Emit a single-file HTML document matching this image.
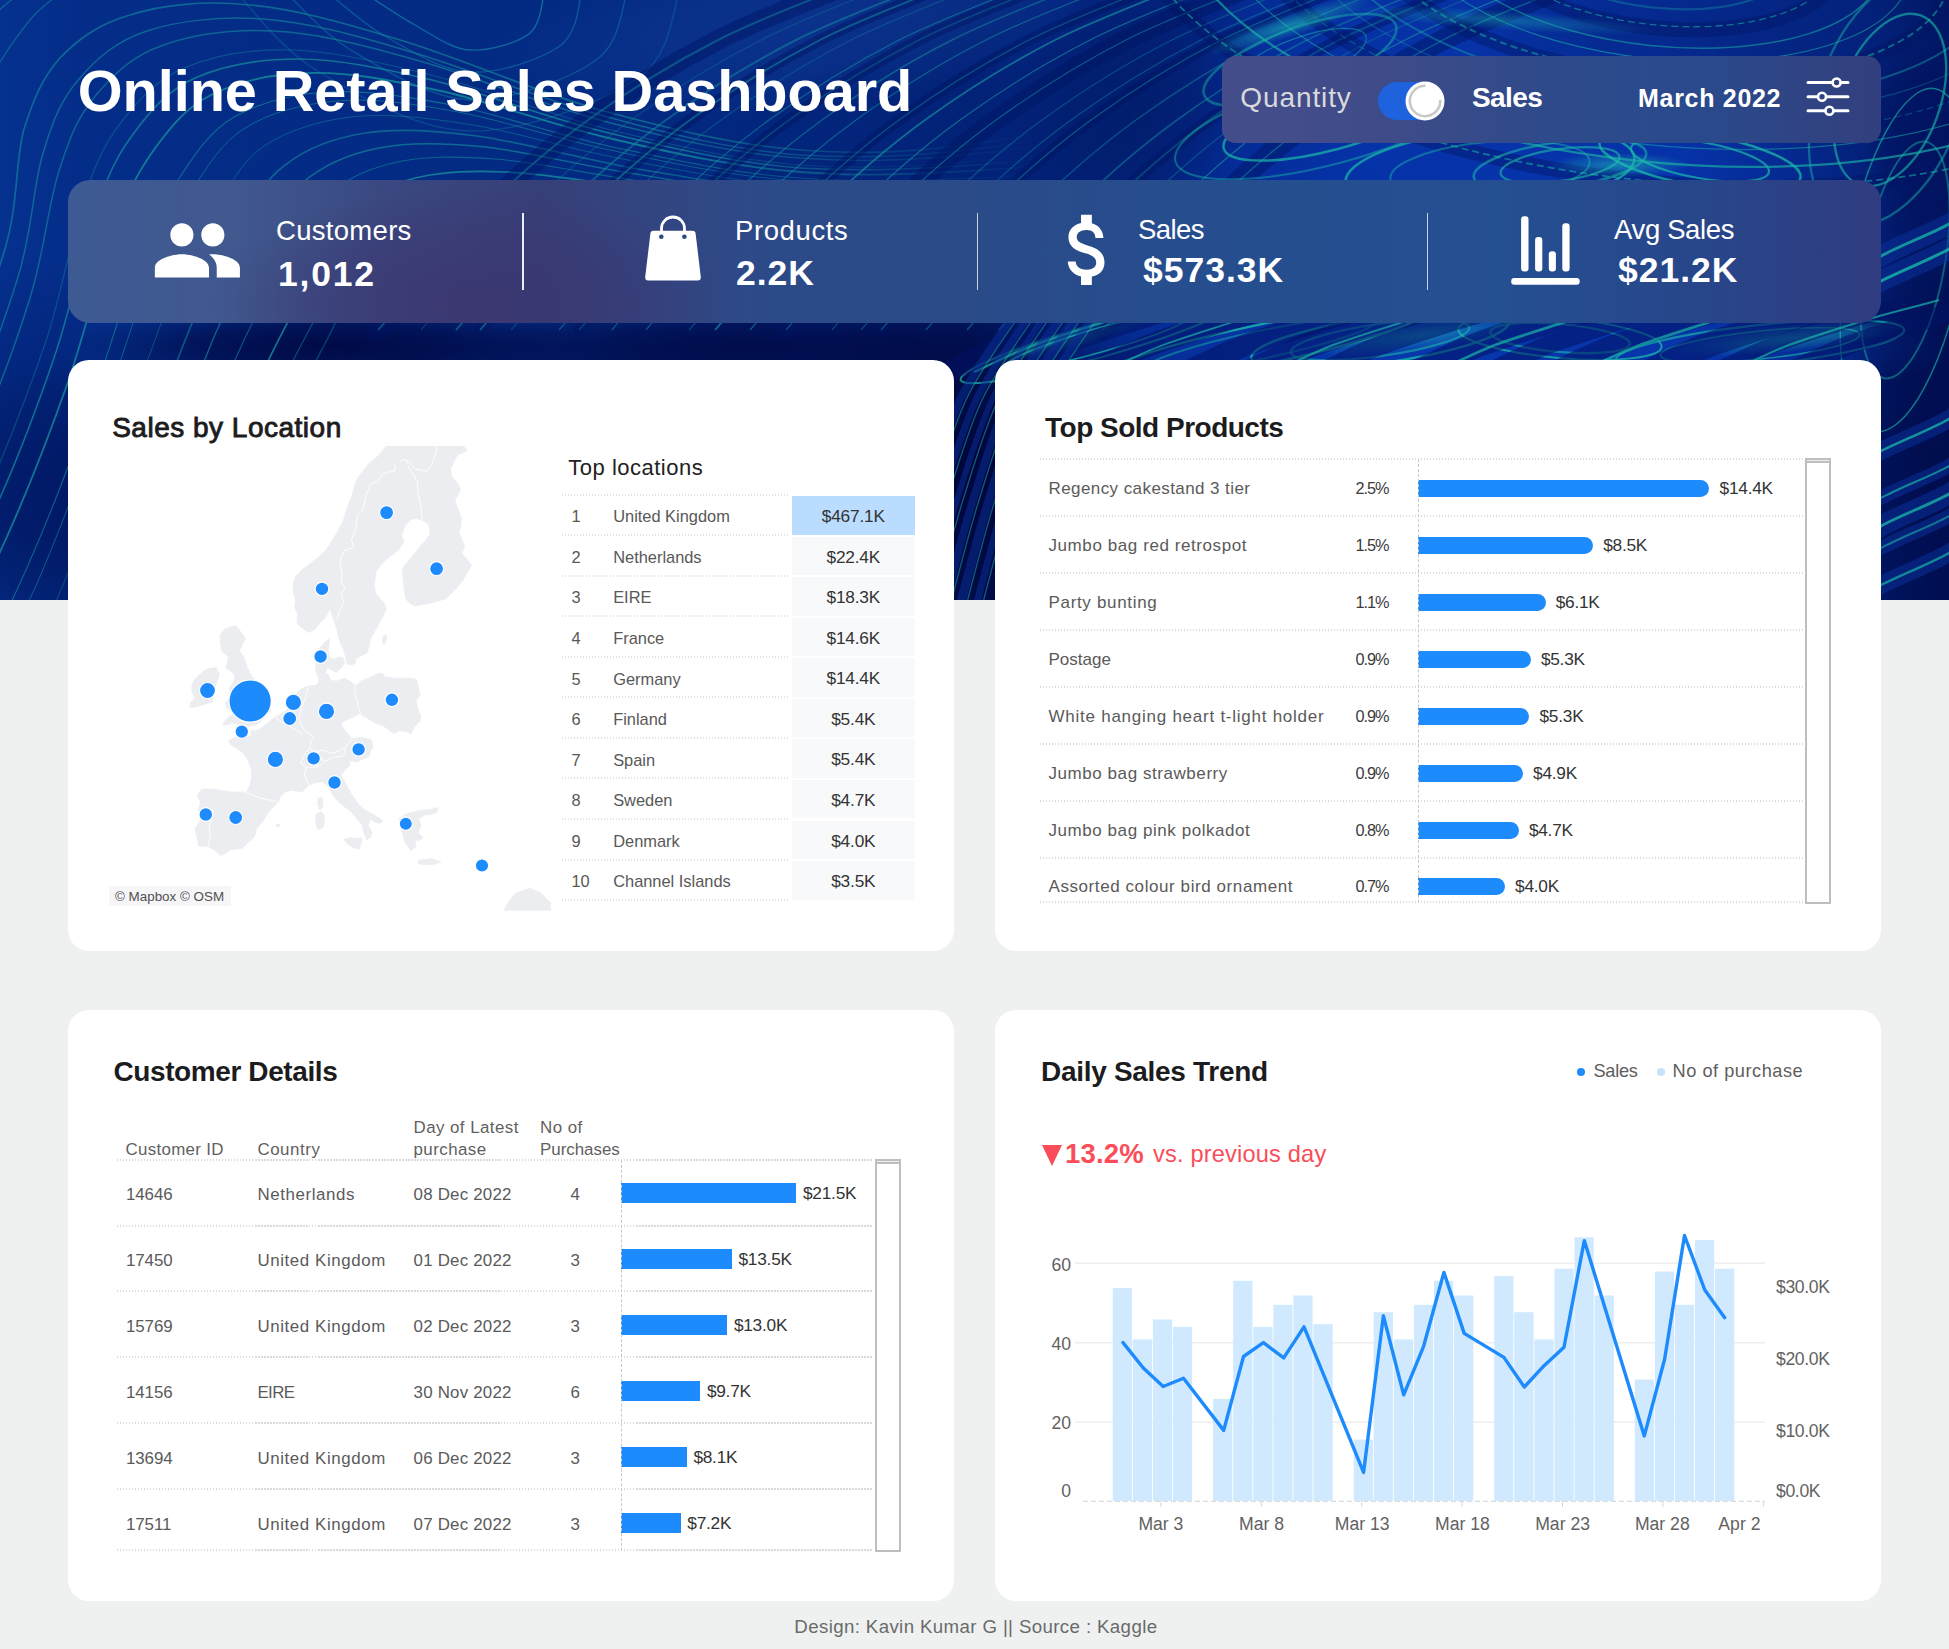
<!DOCTYPE html>
<html lang="en">
<head>
<meta charset="utf-8">
<title>Online Retail Sales Dashboard</title>
<style>
*{box-sizing:border-box;margin:0;padding:0}
html,body{width:1949px;height:1649px;overflow:hidden}
body{background:#eff1f1;font-family:"Liberation Sans",sans-serif;color:#333;position:relative}
.abs{position:absolute}
.t{position:absolute;white-space:nowrap;line-height:1}
.panel{position:absolute;background:#fff;border-radius:21px}
.hero{position:absolute;left:0;top:0;width:1949px;height:600px;overflow:hidden;background:#05308f}
.glass{position:absolute;background:rgba(120,140,200,.38)}
.b{font-weight:bold}
.dotl{height:2px;margin-top:-1px;background:repeating-linear-gradient(90deg,#e3e3e3 0 1.5px,rgba(255,255,255,0) 1.5px 3px)}
.dot{height:2px;margin-top:-1px;background:repeating-linear-gradient(90deg,#dbdbdb 0 1.5px,rgba(255,255,255,0) 1.5px 3px)}
.sbar{border:2px solid #bebebe;background:#fff;box-shadow:inset 0 1px 0 #ededed,inset 0 3px 0 #bebebe}
.vdash{width:0;border-left:1px dashed #c8c8c8}
</style>
</head>
<body>
<div class="hero">
<svg class="abs" style="left:0;top:0" width="1949" height="600" viewBox="0 0 1949 600">
<defs><linearGradient id="bgA" x1="0" y1="0" x2="1" y2="0">
<stop offset="0" stop-color="#05318f"/><stop offset=".04" stop-color="#042d89"/><stop offset=".3" stop-color="#032a82"/>
<stop offset=".5" stop-color="#022277"/><stop offset=".6" stop-color="#032686"/><stop offset=".7" stop-color="#052f9e"/><stop offset=".86" stop-color="#0631a4"/><stop offset=".95" stop-color="#03227c"/><stop offset="1" stop-color="#011560"/>
</linearGradient>
<radialGradient id="rb1"><stop offset="0" stop-color="#00063c" stop-opacity="1"/><stop offset=".5" stop-color="#00063c" stop-opacity="0.70"/><stop offset="1" stop-color="#00063c" stop-opacity="0"/></radialGradient>
<radialGradient id="rb2"><stop offset="0" stop-color="#00063c" stop-opacity="1"/><stop offset=".5" stop-color="#00063c" stop-opacity="0.70"/><stop offset="1" stop-color="#00063c" stop-opacity="0"/></radialGradient>
<radialGradient id="rb3"><stop offset="0" stop-color="#000742" stop-opacity="0.9"/><stop offset=".5" stop-color="#000742" stop-opacity="0.63"/><stop offset="1" stop-color="#000742" stop-opacity="0"/></radialGradient>
<radialGradient id="rb4"><stop offset="0" stop-color="#000742" stop-opacity="0.8"/><stop offset=".5" stop-color="#000742" stop-opacity="0.56"/><stop offset="1" stop-color="#000742" stop-opacity="0"/></radialGradient>
<radialGradient id="rb5"><stop offset="0" stop-color="#000a48" stop-opacity="0.8"/><stop offset=".5" stop-color="#000a48" stop-opacity="0.56"/><stop offset="1" stop-color="#000a48" stop-opacity="0"/></radialGradient>
<radialGradient id="rb6"><stop offset="0" stop-color="#011260" stop-opacity="0.8"/><stop offset=".5" stop-color="#011260" stop-opacity="0.56"/><stop offset="1" stop-color="#011260" stop-opacity="0"/></radialGradient>
<radialGradient id="rb7"><stop offset="0" stop-color="#001868" stop-opacity="0.55"/><stop offset=".5" stop-color="#001868" stop-opacity="0.39"/><stop offset="1" stop-color="#001868" stop-opacity="0"/></radialGradient>
<radialGradient id="rb8"><stop offset="0" stop-color="#15429f" stop-opacity="0.45"/><stop offset=".5" stop-color="#15429f" stop-opacity="0.32"/><stop offset="1" stop-color="#15429f" stop-opacity="0"/></radialGradient>
<radialGradient id="rb9"><stop offset="0" stop-color="#0838ba" stop-opacity="0.5"/><stop offset=".5" stop-color="#0838ba" stop-opacity="0.35"/><stop offset="1" stop-color="#0838ba" stop-opacity="0"/></radialGradient>
<radialGradient id="rb10"><stop offset="0" stop-color="#0a3cb4" stop-opacity="0.45"/><stop offset=".5" stop-color="#0a3cb4" stop-opacity="0.32"/><stop offset="1" stop-color="#0a3cb4" stop-opacity="0"/></radialGradient>
<radialGradient id="rb11"><stop offset="0" stop-color="#0838ac" stop-opacity="0.4"/><stop offset=".5" stop-color="#0838ac" stop-opacity="0.28"/><stop offset="1" stop-color="#0838ac" stop-opacity="0"/></radialGradient>
<radialGradient id="rb12"><stop offset="0" stop-color="#0838b4" stop-opacity="0.4"/><stop offset=".5" stop-color="#0838b4" stop-opacity="0.28"/><stop offset="1" stop-color="#0838b4" stop-opacity="0"/></radialGradient>
<radialGradient id="rb13"><stop offset="0" stop-color="#011a66" stop-opacity="0.75"/><stop offset=".5" stop-color="#011a66" stop-opacity="0.52"/><stop offset="1" stop-color="#011a66" stop-opacity="0"/></radialGradient>
<radialGradient id="rb14"><stop offset="0" stop-color="#04237e" stop-opacity="0.7"/><stop offset=".5" stop-color="#04237e" stop-opacity="0.49"/><stop offset="1" stop-color="#04237e" stop-opacity="0"/></radialGradient>
<linearGradient id="fadeL" gradientUnits="userSpaceOnUse" x1="650" y1="0" x2="1050" y2="0"><stop offset="0" stop-color="#fff"/><stop offset="1" stop-color="#000"/></linearGradient><mask id="mL" maskUnits="userSpaceOnUse" x="-300" y="-100" width="2600" height="900"><rect x="-300" y="-100" width="2600" height="900" fill="url(#fadeL)"/></mask>
<radialGradient id="rg16"><stop offset="0" stop-color="#1fc4b4" stop-opacity="0.55"/><stop offset="1" stop-color="#1fc4b4" stop-opacity="0"/></radialGradient>
<radialGradient id="rg17"><stop offset="0" stop-color="#1fc4b4" stop-opacity="0.55"/><stop offset="1" stop-color="#1fc4b4" stop-opacity="0"/></radialGradient>
<radialGradient id="rg18"><stop offset="0" stop-color="#1fc4b4" stop-opacity="0.55"/><stop offset="1" stop-color="#1fc4b4" stop-opacity="0"/></radialGradient>
<radialGradient id="rg19"><stop offset="0" stop-color="#1fc4b4" stop-opacity="0.55"/><stop offset="1" stop-color="#1fc4b4" stop-opacity="0"/></radialGradient>
<radialGradient id="rg20"><stop offset="0" stop-color="#1fc4b4" stop-opacity="0.4"/><stop offset="1" stop-color="#1fc4b4" stop-opacity="0"/></radialGradient>
<radialGradient id="rg21"><stop offset="0" stop-color="#1fc4b4" stop-opacity="0.35"/><stop offset="1" stop-color="#1fc4b4" stop-opacity="0"/></radialGradient></defs>
<rect width="1949" height="600" fill="url(#bgA)"/>
<ellipse cx="560" cy="500" rx="760" ry="190" fill="url(#rb1)"/>
<ellipse cx="975" cy="480" rx="200" ry="230" fill="url(#rb2)"/>
<ellipse cx="330" cy="345" rx="260" ry="40" fill="url(#rb3)"/>
<ellipse cx="760" cy="345" rx="300" ry="40" fill="url(#rb4)"/>
<ellipse cx="1930" cy="470" rx="110" ry="280" fill="url(#rb5)"/>
<ellipse cx="1925" cy="150" rx="60" ry="150" fill="url(#rb6)"/>
<ellipse cx="30" cy="470" rx="100" ry="220" fill="url(#rb7)"/>
<ellipse cx="820" cy="20" rx="330" ry="90" fill="url(#rb8)" transform="rotate(-8 820 20)"/>
<ellipse cx="1480" cy="250" rx="440" ry="200" fill="url(#rb9)"/>
<ellipse cx="1330" cy="345" rx="330" ry="60" fill="url(#rb10)"/>
<ellipse cx="1720" cy="345" rx="240" ry="50" fill="url(#rb11)"/>
<ellipse cx="1420" cy="60" rx="260" ry="110" fill="url(#rb12)"/>
<ellipse cx="1130" cy="110" rx="120" ry="170" fill="url(#rb13)" transform="rotate(25 1130 110)"/>
<ellipse cx="1720" cy="30" rx="260" ry="70" fill="url(#rb14)"/>
<g mask="url(#mL)">
<path d="M-171 640C-152 603 -90 484 -60 419C-31 354 -10 298 5 249C19 201 15 161 24 129C34 98 42 79 59 59C77 40 98 24 130 15C161 5 205 0 250 5C295 9 341 22 400 40C458 57 533 91 600 110C667 128 733 145 800 150C867 155 925 152 1000 140C1075 128 1208 90 1250 80" fill="none" stroke="#168f9c" stroke-width="1.7" opacity="0.60"/>
<path d="M-151 655C-134 620 -74 506 -46 443C-17 380 3 326 18 277C33 229 33 183 44 150C54 117 62 99 79 79C96 59 116 41 147 31C177 21 219 16 263 19C306 22 352 34 408 51C465 67 538 99 604 116C669 134 734 150 800 155C866 159 925 156 1000 146C1075 136 1208 102 1250 93" fill="none" stroke="#168f9c" stroke-width="1.5" opacity="0.58"/>
<path d="M-135 669C-118 634 -61 524 -33 463C-6 402 14 350 29 301C45 252 48 202 60 168C71 133 79 116 96 95C113 75 132 56 161 46C191 35 231 29 273 31C316 33 360 44 416 60C471 75 542 105 607 122C671 138 734 154 800 158C866 163 925 160 1000 151C1075 142 1208 112 1250 104" fill="none" stroke="#168f9c" stroke-width="1.5" opacity="0.58"/>
<path d="M-109 690C-93 657 -40 553 -14 495C12 436 30 388 47 338C63 288 72 232 85 196C97 159 106 142 122 121C139 100 156 80 184 68C212 56 250 49 291 50C331 51 374 61 427 74C481 87 549 115 611 130C673 145 735 160 800 165C865 170 925 166 1000 159C1075 152 1208 128 1250 122" fill="none" stroke="#168f9c" stroke-width="1.2" opacity="0.39"/>
<path d="M-97 699C-82 668 -30 566 -5 509C21 452 38 405 55 355C72 305 83 245 96 208C110 171 118 154 134 133C150 111 167 91 195 78C222 66 259 59 298 59C338 59 380 68 432 80C485 93 552 120 613 134C675 149 736 163 800 168C864 172 925 169 1000 163C1075 157 1208 135 1250 130" fill="none" stroke="#168f9c" stroke-width="1.6" opacity="0.71"/>
<path d="M-79 715C-64 684 -15 587 9 532C34 476 50 433 68 382C85 332 101 267 115 228C129 190 137 174 153 151C169 129 185 108 211 95C238 82 273 73 311 73C349 72 390 80 441 91C492 102 557 127 617 140C677 154 736 167 800 172C864 177 925 174 1000 169C1075 164 1208 147 1250 143" fill="none" stroke="#168f9c" stroke-width="1.8" opacity="0.79"/>
<path d="M-53 736C-39 707 6 616 29 563C52 511 67 471 85 420C104 368 125 296 140 256C156 216 164 201 180 177C195 154 210 131 234 117C259 103 292 94 328 92C365 90 403 96 452 105C501 115 564 137 622 149C680 161 737 174 800 178C863 183 925 180 1000 177C1075 174 1208 163 1250 160" fill="none" stroke="#168f9c" stroke-width="1.1" opacity="0.63"/>
<path d="M-40 746C-27 718 16 630 39 579C61 527 75 489 94 437C113 386 136 311 152 269C169 228 177 213 192 190C208 166 221 143 245 128C269 113 301 104 337 101C372 98 410 103 458 112C506 121 567 142 624 153C681 165 737 177 800 181C863 186 925 183 1000 181C1075 179 1208 171 1250 169" fill="none" stroke="#168f9c" stroke-width="1.0" opacity="0.59"/>
<path d="M-19 763C-7 737 33 654 55 604C76 555 89 520 108 468C128 416 156 335 173 292C191 249 199 235 214 211C229 187 241 162 264 146C287 131 317 121 351 117C384 113 421 117 467 124C513 131 572 150 628 160C683 171 738 182 800 186C862 191 925 188 1000 188C1075 187 1208 184 1250 183" fill="none" stroke="#168f9c" stroke-width="1.0" opacity="0.46"/>
<path d="M3 781C15 756 51 678 71 632C92 585 103 553 124 500C144 448 176 361 195 316C214 272 222 258 236 233C251 208 262 182 284 166C305 149 333 138 365 133C398 128 433 130 477 136C521 142 578 158 632 168C686 177 739 187 800 192C861 196 925 193 1000 195C1075 196 1208 198 1250 199" fill="none" stroke="#168f9c" stroke-width="1.7" opacity="0.55"/>
<path d="M23 797C34 774 68 701 87 656C106 611 116 582 137 529C159 476 195 383 214 337C234 291 242 279 257 253C271 227 281 201 302 183C322 166 348 154 379 148C409 142 443 143 486 147C529 152 583 166 636 174C688 183 739 192 800 196C861 201 925 198 1000 201C1075 203 1208 210 1250 212" fill="none" stroke="#168f9c" stroke-width="1.4" opacity="0.64"/>
<path d="M44 814C54 792 84 724 102 681C120 639 129 613 152 559C174 505 214 407 235 360C256 312 264 300 278 274C292 247 301 220 320 201C339 183 363 170 393 163C422 156 454 156 495 159C536 162 589 174 640 181C690 188 740 197 800 201C860 206 925 203 1000 207C1075 212 1208 223 1250 227" fill="none" stroke="#168f9c" stroke-width="1.2" opacity="0.56"/>
<path d="M67 833C76 812 103 750 120 709C137 669 144 646 167 592C190 538 235 434 257 384C280 335 287 324 301 297C315 270 323 241 340 221C358 202 380 189 408 180C435 172 466 170 505 172C545 173 595 183 644 189C693 195 741 203 800 207C859 211 925 209 1000 215C1075 220 1208 238 1250 242" fill="none" stroke="#168f9c" stroke-width="1.7" opacity="0.80"/>
<path d="M83 846C91 827 116 768 132 729C148 691 155 670 178 615C202 561 250 452 273 402C296 351 304 341 318 313C331 285 338 255 355 235C372 215 392 201 419 192C445 183 474 180 512 181C550 181 599 189 647 194C695 199 741 207 800 211C859 215 925 213 1000 220C1075 227 1208 248 1250 253" fill="none" stroke="#168f9c" stroke-width="1.2" opacity="0.49"/>
<path d="M98 858C105 840 128 784 143 747C158 710 164 692 188 637C213 582 264 469 288 418C312 366 319 356 333 328C346 299 352 269 368 248C384 227 403 213 428 203C454 193 482 189 519 189C556 188 603 195 650 199C696 204 742 210 800 214C858 219 925 216 1000 224C1075 232 1208 257 1250 263" fill="none" stroke="#168f9c" stroke-width="1.6" opacity="0.38"/>
</g>
<path d="M-260 640C-240 600 -173 468 -140 400C-107 332 -79 278 -60 230C-41 182 -40 145 -25 110C-10 75 12 42 30 20C48 -2 72 -13 80 -20" fill="none" stroke="#168f9c" stroke-width="1.3" opacity=".5"/>
<path d="M-300 640C-280 600 -213 468 -180 400C-147 332 -119 278 -100 230C-81 182 -80 145 -65 110C-50 75 -28 42 -10 20C8 -2 32 -13 40 -20" fill="none" stroke="#168f9c" stroke-width="1.3" opacity=".5"/>
<path d="M-340 640C-320 600 -253 468 -220 400C-187 332 -159 278 -140 230C-121 182 -120 145 -105 110C-90 75 -68 42 -50 20C-32 -2 -8 -13 0 -20" fill="none" stroke="#168f9c" stroke-width="1.3" opacity=".5"/>
<path d="M-380 640C-360 600 -293 468 -260 400C-227 332 -199 278 -180 230C-161 182 -160 145 -145 110C-130 75 -108 42 -90 20C-72 -2 -48 -13 -40 -20" fill="none" stroke="#168f9c" stroke-width="1.3" opacity=".5"/>
<path d="M360 -10C369 -4 397 15 415 25C433 35 451 49 470 50C489 51 518 43 530 33C542 23 542 -3 545 -10" fill="none" stroke="#1682a8" stroke-width="1.4" opacity="0.7"/>
<path d="M325 -10C335 -2 363 24 388 38C412 51 441 71 470 72C499 74 541 59 560 46C579 32 579 -1 582 -10" fill="none" stroke="#1682a8" stroke-width="1.4" opacity="0.5"/>
<path d="M283 -10C295 0 323 34 354 52C386 71 430 98 470 100C510 101 570 79 596 60C622 42 622 2 628 -10" fill="none" stroke="#1682a8" stroke-width="1.4" opacity="0.45"/>
<path d="M234 -10C248 3 277 46 316 70C355 94 416 130 470 131C524 132 603 102 638 78C673 54 673 5 680 -10" fill="none" stroke="#1682a8" stroke-width="1.4" opacity="0.35"/>
<path d="M378 330C395 311 443 250 478 215C513 180 548 149 588 120C628 91 675 62 718 40C761 18 826 -6 848 -15" fill="none" stroke="#011462" stroke-width="20" opacity=".45" stroke-linecap="round"/>
<path d="M378 330C395 311 443 250 478 215C513 180 548 149 588 120C628 91 675 62 718 40C761 18 826 -6 848 -15" fill="none" stroke="#178fa0" stroke-width="2.0" opacity="0.45"/>
<path d="M421 330C438 311 486 250 521 215C556 180 591 149 631 120C671 91 718 62 761 40C804 18 869 -6 891 -15" fill="none" stroke="#178fa0" stroke-width="1.2" opacity="0.30"/>
<path d="M456 330C473 311 521 250 556 215C591 180 626 149 666 120C706 91 753 62 796 40C840 18 905 -6 926 -15" fill="none" stroke="#178fa0" stroke-width="2.0" opacity="0.49"/>
<path d="M480 330C497 311 545 250 580 215C615 180 650 149 690 120C730 91 777 62 820 40C863 18 928 -6 950 -15" fill="none" stroke="#011462" stroke-width="11" opacity=".45" stroke-linecap="round"/>
<path d="M480 330C497 311 545 250 580 215C615 180 650 149 690 120C730 91 777 62 820 40C863 18 928 -6 950 -15" fill="none" stroke="#178fa0" stroke-width="1.8" opacity="0.55"/>
<path d="M511 330C528 311 576 250 611 215C646 180 681 149 721 120C761 91 808 62 851 40C895 18 960 -6 981 -15" fill="none" stroke="#178fa0" stroke-width="1.3" opacity="0.33"/>
<path d="M559 330C576 311 624 250 659 215C694 180 729 149 769 120C809 91 856 62 899 40C943 18 1008 -6 1029 -15" fill="none" stroke="#178fa0" stroke-width="1.1" opacity="0.60"/>
<path d="M579 330C596 311 644 250 679 215C714 180 749 149 789 120C829 91 876 62 919 40C962 18 1027 -6 1049 -15" fill="none" stroke="#011462" stroke-width="11" opacity=".45" stroke-linecap="round"/>
<path d="M579 330C596 311 644 250 679 215C714 180 749 149 789 120C829 91 876 62 919 40C962 18 1027 -6 1049 -15" fill="none" stroke="#178fa0" stroke-width="1.8" opacity="0.32"/>
<path d="M612 330C628 311 677 250 712 215C747 180 782 149 822 120C862 91 908 62 952 40C995 18 1060 -6 1082 -15" fill="none" stroke="#178fa0" stroke-width="1.4" opacity="0.52"/>
<path d="M646 330C662 311 711 250 746 215C781 180 816 149 856 120C896 91 942 62 986 40C1029 18 1094 -6 1116 -15" fill="none" stroke="#178fa0" stroke-width="1.1" opacity="0.59"/>
<path d="M689 330C706 311 754 250 789 215C824 180 859 149 899 120C939 91 986 62 1029 40C1072 18 1137 -6 1159 -15" fill="none" stroke="#011462" stroke-width="11" opacity=".45" stroke-linecap="round"/>
<path d="M689 330C706 311 754 250 789 215C824 180 859 149 899 120C939 91 986 62 1029 40C1072 18 1137 -6 1159 -15" fill="none" stroke="#178fa0" stroke-width="1.2" opacity="0.47"/>
<path d="M715 330C732 311 780 250 815 215C850 180 885 149 925 120C965 91 1012 62 1055 40C1099 18 1164 -6 1185 -15" fill="none" stroke="#178fa0" stroke-width="1.8" opacity="0.69"/>
<path d="M750 330C767 311 815 250 850 215C885 180 920 149 960 120C1000 91 1047 62 1090 40C1133 18 1198 -6 1220 -15" fill="none" stroke="#178fa0" stroke-width="1.2" opacity="0.65"/>
<path d="M786 330C803 311 851 250 886 215C921 180 956 149 996 120C1036 91 1083 62 1126 40C1169 18 1234 -6 1256 -15" fill="none" stroke="#011462" stroke-width="20" opacity=".45" stroke-linecap="round"/>
<path d="M786 330C803 311 851 250 886 215C921 180 956 149 996 120C1036 91 1083 62 1126 40C1169 18 1234 -6 1256 -15" fill="none" stroke="#178fa0" stroke-width="1.1" opacity="0.56"/>
<path d="M832 330C848 311 897 250 932 215C967 180 1002 149 1042 120C1082 91 1128 62 1172 40C1215 18 1280 -6 1302 -15" fill="none" stroke="#178fa0" stroke-width="1.3" opacity="0.39"/>
<path d="M861 330C878 311 926 250 961 215C996 180 1031 149 1071 120C1111 91 1158 62 1201 40C1245 18 1310 -6 1331 -15" fill="none" stroke="#178fa0" stroke-width="1.3" opacity="0.43"/>
<path d="M881 330C898 311 946 250 981 215C1016 180 1051 149 1091 120C1131 91 1178 62 1221 40C1265 18 1330 -6 1351 -15" fill="none" stroke="#011462" stroke-width="11" opacity=".45" stroke-linecap="round"/>
<path d="M881 330C898 311 946 250 981 215C1016 180 1051 149 1091 120C1131 91 1178 62 1221 40C1265 18 1330 -6 1351 -15" fill="none" stroke="#178fa0" stroke-width="1.2" opacity="0.53"/>
<path d="M926 330C943 311 991 250 1026 215C1061 180 1096 149 1136 120C1176 91 1223 62 1266 40C1309 18 1374 -6 1396 -15" fill="none" stroke="#178fa0" stroke-width="1.5" opacity="0.45"/>
<path d="M967 330C984 311 1032 250 1067 215C1102 180 1137 149 1177 120C1217 91 1264 62 1307 40C1351 18 1416 -6 1437 -15" fill="none" stroke="#178fa0" stroke-width="1.6" opacity="0.49"/>
<path d="M999 330C1016 311 1064 250 1099 215C1134 180 1169 149 1209 120C1249 91 1296 62 1339 40C1383 18 1448 -6 1469 -15" fill="none" stroke="#011462" stroke-width="12" opacity=".45" stroke-linecap="round"/>
<path d="M999 330C1016 311 1064 250 1099 215C1134 180 1169 149 1209 120C1249 91 1296 62 1339 40C1383 18 1448 -6 1469 -15" fill="none" stroke="#178fa0" stroke-width="1.9" opacity="0.36"/>
<path d="M1032 330C1049 311 1097 250 1132 215C1167 180 1202 149 1242 120C1282 91 1329 62 1372 40C1416 18 1481 -6 1502 -15" fill="none" stroke="#178fa0" stroke-width="1.2" opacity="0.40"/>
<path d="M1065 330C1081 311 1130 250 1165 215C1200 180 1235 149 1275 120C1315 91 1361 62 1405 40C1448 18 1513 -6 1535 -15" fill="none" stroke="#178fa0" stroke-width="1.2" opacity="0.68"/>
<path d="M1103 330C1120 311 1168 250 1203 215C1238 180 1273 149 1313 120C1353 91 1400 62 1443 40C1486 18 1551 -6 1573 -15" fill="none" stroke="#011462" stroke-width="21" opacity=".45" stroke-linecap="round"/>
<path d="M1103 330C1120 311 1168 250 1203 215C1238 180 1273 149 1313 120C1353 91 1400 62 1443 40C1486 18 1551 -6 1573 -15" fill="none" stroke="#178fa0" stroke-width="1.4" opacity="0.54"/>
<ellipse cx="1660" cy="-50" rx="179" ry="78" fill="none" stroke="#021565" stroke-width="15" opacity=".42" transform="rotate(6 1660 -50)"/>
<ellipse cx="1660" cy="-50" rx="294" ry="128" fill="none" stroke="#021565" stroke-width="15" opacity=".42" transform="rotate(6 1660 -50)"/>
<ellipse cx="1660" cy="-50" rx="414" ry="180" fill="none" stroke="#021565" stroke-width="15" opacity=".42" transform="rotate(6 1660 -50)"/>
<ellipse cx="1660" cy="-50" rx="534" ry="232" fill="none" stroke="#021565" stroke-width="15" opacity=".42" transform="rotate(6 1660 -50)"/>
<ellipse cx="1660" cy="-50" rx="133" ry="58" fill="none" stroke="#19a8a4" stroke-width="2.2" opacity="0.32" transform="rotate(6 1660 -50)"/>
<ellipse cx="1660" cy="-50" rx="173" ry="75" fill="none" stroke="#19a8a4" stroke-width="1.3" opacity="0.62" stroke-dasharray="7 4" transform="rotate(6 1660 -50)"/>
<ellipse cx="1660" cy="-50" rx="221" ry="96" fill="none" stroke="#19a8a4" stroke-width="1.4" opacity="0.57" transform="rotate(6 1660 -50)"/>
<ellipse cx="1660" cy="-50" rx="251" ry="109" fill="none" stroke="#19a8a4" stroke-width="1.1" opacity="0.62" transform="rotate(6 1660 -50)"/>
<ellipse cx="1660" cy="-50" rx="291" ry="126" fill="none" stroke="#19a8a4" stroke-width="2.0" opacity="0.55" stroke-dasharray="7 4" transform="rotate(6 1660 -50)"/>
<ellipse cx="1660" cy="-50" rx="335" ry="146" fill="none" stroke="#19a8a4" stroke-width="2.1" opacity="0.43" transform="rotate(6 1660 -50)"/>
<ellipse cx="1660" cy="-50" rx="369" ry="160" fill="none" stroke="#19a8a4" stroke-width="1.3" opacity="0.31" transform="rotate(6 1660 -50)"/>
<ellipse cx="1660" cy="-50" rx="411" ry="179" fill="none" stroke="#19a8a4" stroke-width="1.2" opacity="0.33" stroke-dasharray="7 4" transform="rotate(6 1660 -50)"/>
<ellipse cx="1660" cy="-50" rx="449" ry="195" fill="none" stroke="#19a8a4" stroke-width="1.2" opacity="0.56" transform="rotate(6 1660 -50)"/>
<ellipse cx="1660" cy="-50" rx="488" ry="212" fill="none" stroke="#19a8a4" stroke-width="2.2" opacity="0.70" transform="rotate(6 1660 -50)"/>
<ellipse cx="1660" cy="-50" rx="531" ry="231" fill="none" stroke="#19a8a4" stroke-width="1.7" opacity="0.61" stroke-dasharray="7 4" transform="rotate(6 1660 -50)"/>
<ellipse cx="1300" cy="60" rx="70" ry="22" fill="none" stroke="#1ab4a8" stroke-width="1.2" opacity="0.51" transform="rotate(-20 1300 60)"/>
<ellipse cx="1300" cy="60" rx="102" ry="32" fill="none" stroke="#1ab4a8" stroke-width="2.5" opacity="0.46" transform="rotate(-20 1300 60)"/>
<ellipse cx="1330" cy="120" rx="110" ry="30" fill="none" stroke="#1ab4a8" stroke-width="2.5" opacity="0.73" transform="rotate(-15 1330 120)"/>
<ellipse cx="1330" cy="120" rx="160" ry="44" fill="none" stroke="#1ab4a8" stroke-width="2.1" opacity="0.46" transform="rotate(-15 1330 120)"/>
<ellipse cx="1560" cy="165" rx="60" ry="16" fill="none" stroke="#1ab4a8" stroke-width="2.2" opacity="0.64" transform="rotate(-8 1560 165)"/>
<ellipse cx="1560" cy="165" rx="87" ry="23" fill="none" stroke="#1ab4a8" stroke-width="2.6" opacity="0.58" transform="rotate(-8 1560 165)"/>
<ellipse cx="1490" cy="170" rx="100" ry="28" fill="none" stroke="#1ab4a8" stroke-width="2.0" opacity="0.48" transform="rotate(-5 1490 170)"/>
<ellipse cx="1490" cy="170" rx="145" ry="41" fill="none" stroke="#1ab4a8" stroke-width="2.5" opacity="0.74" transform="rotate(-5 1490 170)"/>
<ellipse cx="1700" cy="160" rx="70" ry="18" fill="none" stroke="#1ab4a8" stroke-width="2.2" opacity="0.74" transform="rotate(10 1700 160)"/>
<ellipse cx="1700" cy="160" rx="102" ry="26" fill="none" stroke="#1ab4a8" stroke-width="2.5" opacity="0.77" transform="rotate(10 1700 160)"/>
<ellipse cx="1380" cy="340" rx="90" ry="16" fill="none" stroke="#1ab4a8" stroke-width="2.2" opacity="0.59" transform="rotate(-8 1380 340)"/>
<ellipse cx="1380" cy="340" rx="130" ry="23" fill="none" stroke="#1ab4a8" stroke-width="2.4" opacity="0.81" transform="rotate(-8 1380 340)"/>
<ellipse cx="1560" cy="338" rx="70" ry="14" fill="none" stroke="#1ab4a8" stroke-width="2.3" opacity="0.62" transform="rotate(5 1560 338)"/>
<ellipse cx="1560" cy="338" rx="102" ry="20" fill="none" stroke="#1ab4a8" stroke-width="2.0" opacity="0.80" transform="rotate(5 1560 338)"/>
<ellipse cx="1760" cy="345" rx="100" ry="14" fill="none" stroke="#1ab4a8" stroke-width="1.7" opacity="0.70" transform="rotate(-6 1760 345)"/>
<ellipse cx="1760" cy="345" rx="145" ry="20" fill="none" stroke="#1ab4a8" stroke-width="2.1" opacity="0.68" transform="rotate(-6 1760 345)"/>
<ellipse cx="1260" cy="345" rx="120" ry="14" fill="none" stroke="#1ab4a8" stroke-width="2.1" opacity="0.48" transform="rotate(-12 1260 345)"/>
<ellipse cx="1260" cy="345" rx="174" ry="20" fill="none" stroke="#1ab4a8" stroke-width="2.4" opacity="0.85" transform="rotate(-12 1260 345)"/>
<ellipse cx="1100" cy="340" rx="100" ry="12" fill="none" stroke="#1ab4a8" stroke-width="1.7" opacity="0.74" transform="rotate(-16 1100 340)"/>
<ellipse cx="1100" cy="340" rx="145" ry="17" fill="none" stroke="#1ab4a8" stroke-width="2.0" opacity="0.74" transform="rotate(-16 1100 340)"/>
<ellipse cx="1890" cy="100" rx="50" ry="90" fill="none" stroke="#1ab4a8" stroke-width="2.4" opacity="0.63" transform="rotate(20 1890 100)"/>
<ellipse cx="1890" cy="100" rx="72" ry="130" fill="none" stroke="#1ab4a8" stroke-width="2.3" opacity="0.48" transform="rotate(20 1890 100)"/>
<ellipse cx="1905" cy="260" rx="40" ry="120" fill="none" stroke="#1ab4a8" stroke-width="2.0" opacity="0.46" transform="rotate(10 1905 260)"/>
<ellipse cx="1905" cy="260" rx="58" ry="174" fill="none" stroke="#1ab4a8" stroke-width="1.5" opacity="0.64" transform="rotate(10 1905 260)"/>
<ellipse cx="1420" cy="335" rx="110" ry="16" transform="rotate(-8 1420 335)" fill="url(#rg16)"/>
<ellipse cx="1620" cy="165" rx="70" ry="12" transform="rotate(0 1620 165)" fill="url(#rg17)"/>
<ellipse cx="1290" cy="25" rx="90" ry="12" transform="rotate(-18 1290 25)" fill="url(#rg18)"/>
<ellipse cx="1790" cy="338" rx="120" ry="14" transform="rotate(-6 1790 338)" fill="url(#rg19)"/>
<ellipse cx="1060" cy="342" rx="90" ry="10" transform="rotate(-14 1060 342)" fill="url(#rg20)"/>
<ellipse cx="1500" cy="20" rx="160" ry="10" transform="rotate(4 1500 20)" fill="url(#rg21)"/>
<path d="M946 372C956 368 984 353 1006 345C1028 337 1051 330 1076 322C1101 314 1143 304 1156 300" fill="none" stroke="#021264" stroke-width="20" opacity=".55"/>
<path d="M946 372C956 368 984 353 1006 345C1028 337 1051 330 1076 322C1101 314 1143 304 1156 300" fill="none" stroke="#1ab4a8" stroke-width="2.4" opacity=".7" transform="translate(28 0)"/>
<path d="M1011 372C1021 368 1049 353 1071 345C1092 337 1116 330 1141 322C1166 314 1207 304 1221 300" fill="none" stroke="#021264" stroke-width="14" opacity=".55"/>
<path d="M1090 372C1100 368 1128 353 1150 345C1172 337 1195 330 1220 322C1245 314 1287 304 1300 300" fill="none" stroke="#021264" stroke-width="22" opacity=".55"/>
<path d="M1090 372C1100 368 1128 353 1150 345C1172 337 1195 330 1220 322C1245 314 1287 304 1300 300" fill="none" stroke="#1ab4a8" stroke-width="1.8" opacity=".7" transform="translate(13 0)"/>
<path d="M1186 372C1196 368 1225 353 1246 345C1268 337 1291 330 1316 322C1341 314 1383 304 1396 300" fill="none" stroke="#021264" stroke-width="22" opacity=".55"/>
<path d="M1250 372C1260 368 1289 353 1310 345C1332 337 1355 330 1380 322C1405 314 1447 304 1460 300" fill="none" stroke="#021264" stroke-width="25" opacity=".55"/>
<path d="M1250 372C1260 368 1289 353 1310 345C1332 337 1355 330 1380 322C1405 314 1447 304 1460 300" fill="none" stroke="#1ab4a8" stroke-width="2.0" opacity=".7" transform="translate(23 0)"/>
<path d="M1321 372C1331 368 1359 353 1381 345C1403 337 1426 330 1451 322C1476 314 1518 304 1531 300" fill="none" stroke="#021264" stroke-width="19" opacity=".55"/>
<path d="M1417 372C1427 368 1456 353 1477 345C1499 337 1522 330 1547 322C1572 314 1614 304 1627 300" fill="none" stroke="#021264" stroke-width="25" opacity=".55"/>
<path d="M1417 372C1427 368 1456 353 1477 345C1499 337 1522 330 1547 322C1572 314 1614 304 1627 300" fill="none" stroke="#1ab4a8" stroke-width="2.8" opacity=".7" transform="translate(18 0)"/>
<path d="M1488 372C1498 368 1527 353 1548 345C1570 337 1593 330 1618 322C1643 314 1685 304 1698 300" fill="none" stroke="#021264" stroke-width="18" opacity=".55"/>
<path d="M1553 372C1563 368 1591 353 1613 345C1635 337 1658 330 1683 322C1708 314 1750 304 1763 300" fill="none" stroke="#021264" stroke-width="20" opacity=".55"/>
<path d="M1553 372C1563 368 1591 353 1613 345C1635 337 1658 330 1683 322C1708 314 1750 304 1763 300" fill="none" stroke="#1ab4a8" stroke-width="2.8" opacity=".7" transform="translate(27 0)"/>
<path d="M1648 372C1658 368 1687 353 1708 345C1730 337 1753 330 1778 322C1803 314 1845 304 1858 300" fill="none" stroke="#021264" stroke-width="25" opacity=".55"/>
<path d="M1713 372C1723 368 1752 353 1773 345C1795 337 1818 330 1843 322C1868 314 1910 304 1923 300" fill="none" stroke="#021264" stroke-width="16" opacity=".55"/>
<path d="M1713 372C1723 368 1752 353 1773 345C1795 337 1818 330 1843 322C1868 314 1910 304 1923 300" fill="none" stroke="#1ab4a8" stroke-width="2.2" opacity=".7" transform="translate(16 0)"/>
<path d="M1789 372C1799 368 1828 353 1849 345C1871 337 1894 330 1919 322C1944 314 1986 304 1999 300" fill="none" stroke="#021264" stroke-width="19" opacity=".55"/>
<path d="M895 610C900 592 914 535 925 500C936 465 946 430 960 400C974 370 1002 333 1010 320" fill="none" stroke="#0a2f9a" stroke-width="8" opacity=".5"/>
<path d="M895 610C900 592 914 535 925 500C936 465 946 430 960 400C974 370 1002 333 1010 320" fill="none" stroke="#169aa0" stroke-width="1.3" opacity=".6" transform="translate(6 0)"/>
<path d="M911 610C916 592 930 535 941 500C952 465 962 430 976 400C990 370 1018 333 1026 320" fill="none" stroke="#0a2f9a" stroke-width="7" opacity=".5"/>
<path d="M911 610C916 592 930 535 941 500C952 465 962 430 976 400C990 370 1018 333 1026 320" fill="none" stroke="#169aa0" stroke-width="1.3" opacity=".6" transform="translate(6 0)"/>
<path d="M927 610C932 592 946 535 957 500C968 465 978 430 992 400C1006 370 1034 333 1042 320" fill="none" stroke="#0a2f9a" stroke-width="6" opacity=".5"/>
<path d="M927 610C932 592 946 535 957 500C968 465 978 430 992 400C1006 370 1034 333 1042 320" fill="none" stroke="#169aa0" stroke-width="1.3" opacity=".6" transform="translate(6 0)"/>
<path d="M943 610C948 592 962 535 973 500C984 465 994 430 1008 400C1022 370 1050 333 1058 320" fill="none" stroke="#0a2f9a" stroke-width="8" opacity=".5"/>
<path d="M943 610C948 592 962 535 973 500C984 465 994 430 1008 400C1022 370 1050 333 1058 320" fill="none" stroke="#169aa0" stroke-width="1.3" opacity=".6" transform="translate(6 0)"/>
<path d="M959 610C964 592 978 535 989 500C1000 465 1010 430 1024 400C1038 370 1066 333 1074 320" fill="none" stroke="#0a2f9a" stroke-width="9" opacity=".5"/>
<path d="M959 610C964 592 978 535 989 500C1000 465 1010 430 1024 400C1038 370 1066 333 1074 320" fill="none" stroke="#169aa0" stroke-width="1.3" opacity=".6" transform="translate(6 0)"/>
<path d="M975 610C980 592 994 535 1005 500C1016 465 1026 430 1040 400C1054 370 1082 333 1090 320" fill="none" stroke="#0a2f9a" stroke-width="7" opacity=".5"/>
<path d="M975 610C980 592 994 535 1005 500C1016 465 1026 430 1040 400C1054 370 1082 333 1090 320" fill="none" stroke="#169aa0" stroke-width="1.3" opacity=".6" transform="translate(6 0)"/>
<path d="M1840 281C1847 277 1863 266 1881 256C1899 246 1931 234 1949 224C1967 214 1983 201 1990 196" fill="none" stroke="#0a329e" stroke-width="21" opacity=".5"/>
<path d="M1840 281C1847 277 1863 266 1881 256C1899 246 1931 234 1949 224C1967 214 1983 201 1990 196" fill="none" stroke="#18b0a6" stroke-width="3" opacity="0.8"/>
<path d="M1840 306C1847 302 1863 290 1881 281C1899 272 1931 259 1949 249C1967 239 1983 226 1990 221" fill="none" stroke="#0a329e" stroke-width="21" opacity=".5"/>
<path d="M1840 306C1847 302 1863 290 1881 281C1899 272 1931 259 1949 249C1967 239 1983 226 1990 221" fill="none" stroke="#18b0a6" stroke-width="3" opacity="0.85"/>
<path d="M1840 476C1847 472 1863 460 1881 451C1899 442 1931 429 1949 419C1967 409 1983 396 1990 391" fill="none" stroke="#0a329e" stroke-width="18" opacity=".5"/>
<path d="M1840 476C1847 472 1863 460 1881 451C1899 442 1931 429 1949 419C1967 409 1983 396 1990 391" fill="none" stroke="#18b0a6" stroke-width="2.5" opacity="0.8"/>
<path d="M1840 523C1847 519 1863 508 1881 498C1899 488 1931 476 1949 466C1967 456 1983 443 1990 438" fill="none" stroke="#0a329e" stroke-width="14" opacity=".5"/>
<path d="M1840 523C1847 519 1863 508 1881 498C1899 488 1931 476 1949 466C1967 456 1983 443 1990 438" fill="none" stroke="#18b0a6" stroke-width="2" opacity="0.7"/>
<path d="M1840 551C1847 547 1863 536 1881 526C1899 516 1931 504 1949 494C1967 484 1983 471 1990 466" fill="none" stroke="#0a329e" stroke-width="21" opacity=".5"/>
<path d="M1840 551C1847 547 1863 536 1881 526C1899 516 1931 504 1949 494C1967 484 1983 471 1990 466" fill="none" stroke="#18b0a6" stroke-width="3" opacity="0.8"/>
<path d="M1840 573C1847 569 1863 558 1881 548C1899 538 1931 526 1949 516C1967 506 1983 493 1990 488" fill="none" stroke="#0a329e" stroke-width="14" opacity=".5"/>
<path d="M1840 573C1847 569 1863 558 1881 548C1899 538 1931 526 1949 516C1967 506 1983 493 1990 488" fill="none" stroke="#18b0a6" stroke-width="2" opacity="0.6"/>
<path d="M1840 610C1847 606 1863 594 1881 585C1899 576 1931 563 1949 553C1967 543 1983 530 1990 525" fill="none" stroke="#0a329e" stroke-width="18" opacity=".5"/>
<path d="M1840 610C1847 606 1863 594 1881 585C1899 576 1931 563 1949 553C1967 543 1983 530 1990 525" fill="none" stroke="#18b0a6" stroke-width="2.5" opacity="0.7"/>
</svg>
</div>
<!-- header -->
<div class="t b" style="left:77.8px;top:62.7px;font-size:57.7px;color:#fff;letter-spacing:-.08px">Online Retail Sales Dashboard</div>
<div class="abs" style="left:1221.5px;top:56px;width:659.5px;height:86.8px;border-radius:14px;background:linear-gradient(90deg,#454e8b 0%,#3f4b89 25%,#2e4a8a 50%,#2a4a8c 72%,#333f7e 100%)"></div>
<div class="t" style="left:1240.3px;top:84.2px;font-size:28px;color:#d9d9dc;letter-spacing:.9px">Quantity</div>
<div class="abs" style="left:1378px;top:82px;width:66px;height:38px;border-radius:19px;background:#1f62dd"></div>
<svg class="abs" style="left:1404px;top:80px" width="42" height="42" viewBox="0 0 42 42"><circle cx="21" cy="21" r="19.5" fill="#fff"/><path d="M21.5 5.800 A15.200 15.200 0 1 0 36.200 20" fill="none" stroke="#c9c9c9" stroke-width="2.6"/></svg>
<div class="t b" style="left:1472px;top:84.2px;font-size:28px;color:#fff;letter-spacing:-.6px">Sales</div>
<div class="t b" style="left:1638px;top:85.8px;font-size:25px;color:#fff;letter-spacing:.7px">March 2022</div>
<svg class="abs" style="left:1800px;top:72px" width="56" height="50" viewBox="0 0 56 50" fill="none" stroke="#fff" stroke-width="3" stroke-linecap="round">
<path d="M8 10.5H32M41 10.5H48M8 24.7H17.5M26.5 24.7H48M8 38.8H25M34 38.8H48"/>
<circle cx="36.6" cy="10.5" r="4" stroke-width="2.6"/><circle cx="22" cy="24.7" r="4" stroke-width="2.6"/><circle cx="29.4" cy="38.8" r="4" stroke-width="2.6"/>
</svg>
<!-- KPI bar -->
<div class="abs" style="left:68px;top:180px;width:1813px;height:143px;border-radius:22px;background:radial-gradient(ellipse 260px 120px at 400px 125px,rgba(60,52,110,.8),rgba(60,52,110,.45) 55%,rgba(60,50,108,0) 100%),linear-gradient(90deg,#3e5a93 0%,#40598f 9%,#3a4780 18%,#373f78 26%,#324581 32%,#2d4a88 38%,#2a4a88 50%,#264e8e 62%,#244f91 79%,#28468a 90%,#303c80 100%)"></div>
<div class="abs" style="left:522px;top:213px;width:2px;height:77px;background:rgba(255,255,255,.9)"></div>
<div class="abs" style="left:977px;top:213px;width:1px;height:77px;background:rgba(255,255,255,.75)"></div>
<div class="abs" style="left:1427px;top:213px;width:1px;height:77px;background:rgba(255,255,255,.75)"></div>
<!-- customers -->
<svg class="abs" style="left:151px;top:203.6px" width="92.8" height="92.8" viewBox="0 0 24 24" fill="#fff"><path d="M16 11c1.66 0 2.99-1.34 2.99-3S17.66 5 16 5c-1.66 0-3 1.34-3 3s1.34 3 3 3zm-8 0c1.66 0 2.99-1.34 2.99-3S9.66 5 8 5C6.34 5 5 6.34 5 8s1.34 3 3 3zm0 2c-2.330 0-7 1.170-7 3.500V19h14v-2.500c0-2.330-4.670-3.500-7-3.500zm8 0c-.290 0-.620.020-.970.050 1.160.840 1.970 1.970 1.970 3.450V19h6v-2.500c0-2.330-4.670-3.500-7-3.500z"/></svg>
<div class="t" style="left:276px;top:216.6px;font-size:27.5px;color:#fff;letter-spacing:.3px">Customers</div>
<div class="t b" style="left:278px;top:257px;font-size:35.5px;color:#fff;letter-spacing:1.8px">1,012</div>
<!-- products -->
<svg class="abs" style="left:640px;top:210px" width="66" height="76" viewBox="0 0 66 76"><path d="M13.500 20.700H52.500Q55.300 20.700 55.600 23.500L60.800 67Q61.100 70.400 57.800 70.400H8.200Q4.900 70.400 5.200 67L10.400 23.500Q10.700 20.700 13.500 20.700Z" fill="#fff"/><path d="M21.500 27V18.500a11.500 11.500 0 0 1 23 0V27" fill="none" stroke="#fff" stroke-width="2.8"/><circle cx="21.300" cy="26.800" r="2.300" fill="#2b4a86"/><circle cx="44.400" cy="26.800" r="2.300" fill="#2b4a86"/></svg>
<div class="t" style="left:735px;top:216.6px;font-size:27.5px;color:#fff;letter-spacing:.6px">Products</div>
<div class="t b" style="left:736px;top:256.2px;font-size:35.5px;color:#fff;letter-spacing:1px">2.2K</div>
<!-- sales -->
<svg class="abs" style="left:1044.6px;top:203px" width="86.5" height="93.6" viewBox="0 0 24 24" preserveAspectRatio="none" fill="#fff"><path d="M11.800 10.900c-2.270-.590-3-1.200-3-2.150 0-1.090 1.010-1.850 2.700-1.850 1.780 0 2.440.850 2.500 2.100h2.210c-.070-1.720-1.120-3.300-3.210-3.810V3h-3v2.160c-1.940.420-3.500 1.680-3.500 3.610 0 2.310 1.910 3.460 4.700 4.130 2.500.600 3 1.480 3 2.410 0 .690-.490 1.790-2.700 1.790-2.060 0-2.870-.920-2.980-2.100h-2.200c.120 2.190 1.760 3.420 3.680 3.830V21h3v-2.150c1.950-.370 3.500-1.500 3.500-3.550 0-2.840-2.430-3.810-4.700-4.400z"/></svg>
<div class="t" style="left:1138px;top:215.800px;font-size:27.5px;color:#fff;letter-spacing:-.6px">Sales</div>
<div class="t b" style="left:1143px;top:252.700px;font-size:35.5px;color:#fff;letter-spacing:1px">$573.3K</div>
<!-- avg sales -->
<svg class="abs" style="left:1505px;top:210px" width="82" height="80" viewBox="0 0 82 80" fill="#fff"><rect x="6.200" y="68.100" width="68.500" height="6.600" rx="3"/><rect x="16.100" y="6.200" width="7.400" height="55.300" rx="3"/><rect x="30.100" y="27" width="7.200" height="34.500" rx="3"/><rect x="43.800" y="41.200" width="7.100" height="20.300" rx="3"/><rect x="57.300" y="13.200" width="7.300" height="48.300" rx="3"/></svg>
<div class="t" style="left:1614px;top:215.600px;font-size:27.5px;color:#fff;letter-spacing:-.35px">Avg Sales</div>
<div class="t b" style="left:1618px;top:252.700px;font-size:35.5px;color:#fff;letter-spacing:1px">$21.2K</div>
<!-- Sales by Location -->
<div class="panel" style="left:68px;top:360px;width:886px;height:591px"></div>
<div class="t" style="left:112.2px;top:413.5px;font-size:28px;color:#1c1c1e;letter-spacing:.5px;-webkit-text-stroke:.9px #1c1c1e">Sales by Location</div>
<svg class="abs" style="left:68px;top:360px" width="500" height="590" viewBox="68 360 500 590">
<defs><clipPath id="mapclip"><rect x="110" y="446" width="441.500" height="465"/></clipPath></defs>
<g clip-path="url(#mapclip)">
<path fill="#ecedf1" stroke="#ecedf1" stroke-width="0.8" stroke-linejoin="round" d="M386.4,445.8 380.6,453.1 374.8,458.9 370.4,461.8 364.6,469.1 358.8,476.4 355.9,482.2 353.7,489.5 351.5,496.8 347.9,505.5 345.7,512.8 342.8,521.5 338.4,530.2 334.0,537.5 329.7,544.8 323.8,552.1 319.5,556.4 313.7,560.8 306.4,566.6 299.1,572.4 294.7,578.3 293.0,585.5 293.3,592.8 295.5,600.1 294.7,607.4 297.7,614.6 296.9,623.4 303.5,629.2 309.3,632.4 315.1,629.2 319.5,623.4 325.3,617.6 328.2,611.7 330.0,608.8 331.9,614.6 334.0,620.5 336.9,629.2 338.4,636.5 340.6,643.8 343.5,649.6 345.7,656.9 347.1,664.1 351.5,664.9 355.1,663.4 355.9,659.0 361.7,655.4 366.8,653.2 369.0,646.7 370.4,639.4 374.1,632.1 377.7,626.3 382.1,617.6 386.4,608.8 384.2,603.0 380.6,599.4 376.2,594.3 374.1,585.5 375.1,578.3 376.2,571.0 380.6,565.2 386.4,559.3 392.3,555.0 398.1,550.6 401.7,544.8 403.9,541.9 401.7,536.1 403.2,530.2 406.1,524.4 411.2,519.3 417.0,518.6 422.1,520.3 427.9,523.7 430.1,528.8 429.8,534.6 425.7,540.4 421.4,544.8 417.0,550.6 413.4,555.0 408.3,560.8 404.6,565.2 402.4,569.5 402.7,575.4 403.6,582.6 404.2,591.4 406.1,599.4 410.4,603.7 415.5,605.9 422.8,604.5 430.1,603.0 438.8,600.8 446.1,598.6 451.9,592.8 457.7,587.0 462.1,581.2 465.8,575.4 471.6,565.2 466.5,558.6 461.8,553.5 464.7,547.0 462.4,540.4 459.2,533.1 460.7,525.9 461.4,518.6 458.5,509.9 454.8,501.1 457.7,495.3 460.7,489.5 457.0,482.2 451.9,476.4 450.5,469.1 453.7,461.8 457.7,454.6 463.6,452.4 467.2,450.9 465.0,448.0 463.6,445.8Z M191.9,684.9 194.4,679.8 198.7,675.6 205.5,669.6 211.4,667.9 216.5,667.9 219.4,674.7 217.0,681.5 214.8,688.3 214.0,695.1 212.3,701.9 205.5,703.9 200.4,705.6 194.4,707.3 189.8,707.0 190.5,702.7 195.3,697.6 191.9,692.5Z M219.9,636.5 222.5,631.4 225.0,628.9 230.9,626.8 236.0,625.5 241.1,632.3 245.4,638.2 242.0,645.0 239.4,650.9 243.2,656.0 244.5,659.4 247.1,667.1 251.3,675.6 255.6,680.7 258.5,685.8 261.5,695.1 268.3,700.2 270.8,706.1 270.0,712.1 264.9,717.2 260.7,721.4 256.4,724.8 249.6,726.0 244.5,726.5 237.7,724.3 232.6,723.1 227.5,724.8 222.5,725.1 225.8,719.7 230.1,716.3 236.0,712.1 230.9,710.0 227.5,708.7 225.0,702.7 228.4,699.3 230.9,695.9 229.2,688.3 232.6,683.2 234.7,679.0 234.3,673.9 230.1,671.3 225.8,667.9 227.5,662.0 228.4,656.9 224.5,653.5 221.6,650.9 220.4,643.3Z M317.9,676.8 315.8,669.6 315.8,663.7 317.2,656.0 319.2,649.2 324.3,642.5 329.4,638.7 329.1,644.5 328.1,650.1 329.4,656.9 333.7,659.4 338.8,656.9 343.0,657.7 344.4,663.7 340.5,668.8 336.2,672.2 331.1,669.6 327.4,667.9 325.7,672.2 324.3,676.8Z M228.4,740.9 234.3,737.5 244.5,737.2 251.3,735.8 250.5,730.8 254.7,730.8 259.8,729.1 268.3,722.6 275.1,717.2 281.9,713.4 288.7,708.7 292.9,701.9 297.2,692.5 302.3,688.3 306.5,686.6 307.8,686.6 312.7,685.5 316.0,685.5 318.4,682.2 319.3,676.8 318.0,672.9 323.7,672.6 328.0,674.6 331.3,680.6 336.8,681.1 344.4,678.4 349.9,681.1 355.3,685.5 357.0,685.3 360.8,681.1 369.5,677.9 378.2,673.5 383.2,673.5 384.8,676.8 392.4,677.9 405.5,678.4 414.3,678.4 417.0,681.1 418.6,688.8 420.3,695.3 415.9,700.8 417.5,707.3 420.8,716.1 420.3,720.4 414.3,727.0 411.0,734.1 405.5,731.3 400.1,730.8 393.5,733.5 389.2,730.2 384.8,727.0 380.4,724.8 376.1,723.7 370.6,720.4 367.3,718.2 361.3,715.0 360.2,712.8 355.3,716.1 347.7,719.3 341.1,722.6 342.8,728.1 349.9,735.7 352.0,739.0 360.8,737.3 366.2,738.4 371.7,740.1 373.3,746.6 370.6,751.0 369.0,756.4 363.0,759.2 356.4,761.9 349.9,760.8 349.9,765.2 345.5,769.5 341.1,775.0 347.3,786.8 353.2,797.0 358.3,803.8 363.4,808.9 375.3,815.7 382.9,820.8 380.4,823.3 375.3,822.4 370.2,819.1 368.1,825.8 372.2,832.6 370.2,837.7 366.8,839.8 363.7,832.6 362.5,825.8 360.0,822.4 355.8,817.4 351.5,812.3 343.0,805.5 337.1,800.4 332.8,795.3 329.4,788.5 326.0,784.2 322.6,781.7 315.8,782.5 309.1,785.1 304.8,789.3 302.3,791.9 297.2,791.5 292.1,790.2 285.3,791.9 280.2,797.0 278.5,802.1 275.1,805.5 268.3,812.3 263.2,820.8 259.0,825.8 256.4,829.2 254.7,836.0 251.3,840.3 247.9,842.8 242.8,847.9 236.9,849.3 230.9,849.6 225.8,853.0 220.8,855.6 216.5,852.2 214.0,849.6 207.2,846.2 198.7,846.2 197.0,837.7 194.9,829.2 200.4,820.8 198.3,810.6 200.4,802.1 197.0,795.3 202.1,788.8 214.0,789.3 230.9,791.9 246.2,792.2 250.0,785.1 251.7,776.6 251.3,769.8 247.9,759.6 242.8,752.8 236.0,747.7 230.9,745.2Z M343.9,839.4 349.8,837.7 355.8,838.6 362.0,837.4 360.8,844.5 359.1,849.3 354.9,848.3 348.1,844.5Z M315.8,814.3 320.9,811.4 324.3,815.3 324.0,822.4 322.6,827.9 317.5,829.6 315.8,822.4Z M318.4,798.3 322.0,797.5 323.0,807.2 319.6,810.1 317.5,803.8Z M275.9,824.5 279.3,823.8 280.2,826.2 276.8,826.9Z M382.9,636.5 385.8,634.8 386.8,638.2 384.6,644.5 382.4,642.5Z M399.1,819.1 405.8,814.0 417.7,810.9 431.3,809.2 438.1,807.5 436.7,812.3 431.3,814.3 424.5,815.0 418.6,819.1 421.1,825.8 418.1,832.6 423.2,837.7 418.6,841.1 415.2,839.1 415.7,846.2 411.3,851.0 407.5,846.2 404.5,841.1 402.4,832.6 399.4,825.8Z M418.6,861.2 426.2,862.0 434.7,863.2 434.4,864.2 424.5,863.4 418.2,862.2Z M503.8,910.3 509.3,901.0 514.9,893.6 529.7,888.1 540.8,892.9 550.8,902.9 550.8,910.3Z M418.0,860.4 431.7,858.5 440.9,862.2 429.8,864.8 418.7,864.1Z"/>
<path fill="none" stroke="#fff" stroke-width="1" stroke-linejoin="round" opacity=".9" d="M246.2,792.2 253.0,795.3 261.5,798.3 271.7,800.4 278.5,802.1 M208.0,808.9 214.0,810.6 211.4,819.1 208.9,827.5 210.6,837.7 208.0,846.2 M307.8,686.6 306.7,694.2 303.5,703.0 300.7,710.6 299.1,718.2 301.3,724.8 305.1,731.3 313.8,736.8 311.1,741.2 309.7,748.8 M309.7,748.8 316.0,751.0 323.7,750.4 332.4,753.2 338.9,751.0 345.5,746.6 352.0,739.0 M355.3,685.5 354.8,692.0 358.0,705.1 360.8,713.9 M345.5,746.6 344.4,753.2 341.1,756.4 332.4,757.5 326.9,760.8 321.5,759.7 317.1,751.0 M309.7,748.8 305.1,753.2 300.7,763.0 306.2,767.4 304.6,775.0 307.3,781.6 309.5,787.0 M306.2,767.4 312.7,767.9 321.5,765.2 326.9,760.8 M394.4,463.3 395.2,470.6 382.1,474.2 378.4,481.5 370.4,483.7 366.1,495.3 363.1,509.9 357.3,515.7 355.9,527.3 351.5,540.4 353.7,547.7 344.2,550.6 339.9,560.8 342.0,573.9 341.3,582.6 345.0,588.5 341.3,594.3 343.5,601.5 339.1,613.2 336.9,620.5 M399.5,461.8 405.4,458.9 409.7,469.1 417.0,480.8 418.5,495.3 421.4,508.4 422.1,520.3 M405.4,458.9 415.5,469.1 427.2,471.3 433.0,461.8 437.4,445.8 M275.1,717.2 281.9,722.3 288.7,725.7 297.2,730.8 302.3,734.1"/>
</g>
<g fill="#1e8bfd" stroke="#fff" stroke-width="1.2">
<circle cx="207.5" cy="690.5" r="8"/>
<circle cx="250.1" cy="701" r="21.2"/>
<circle cx="293.4" cy="702.4" r="8.2"/>
<circle cx="289.7" cy="718.5" r="7"/>
<circle cx="326.5" cy="711.4" r="8.2"/>
<circle cx="241.8" cy="731.6" r="6.8"/>
<circle cx="275.4" cy="759.3" r="8.2"/>
<circle cx="313.6" cy="758.4" r="6.8"/>
<circle cx="358.6" cy="749.4" r="6.8"/>
<circle cx="391.9" cy="699.8" r="6.8"/>
<circle cx="320.6" cy="656.5" r="6.8"/>
<circle cx="334.5" cy="782.5" r="6.8"/>
<circle cx="205.8" cy="814.5" r="6.8"/>
<circle cx="235.7" cy="817.5" r="7"/>
<circle cx="405.8" cy="823.8" r="6.6"/>
<circle cx="386.6" cy="512.6" r="7"/>
<circle cx="436.6" cy="568.7" r="7"/>
<circle cx="322" cy="588.9" r="6.8"/>
<circle cx="482" cy="865.5" r="6.7"/>
</g>
</svg>

<div class="abs" style="left:109px;top:886px;width:122px;height:20px;background:rgba(245,245,247,.9)"></div>
<div class="t" style="left:115px;top:890px;font-size:13.4px;color:#505050">© Mapbox © OSM</div>
<div class="t" style="left:568.3px;top:457.4px;font-size:22px;color:#222;letter-spacing:.5px">Top locations</div>
<div class="abs dotl" style="left:562px;top:494.5px;width:226px"></div>
<div class="t" style="left:571.5px;top:508.3px;font-size:16.4px;color:#585858">1</div>
<div class="t" style="left:613.2px;top:508.3px;font-size:16.4px;color:#585858">United Kingdom</div>
<div class="abs" style="left:792px;top:496.1px;width:122.6px;height:38.6px;background:#badcfe;text-align:center;font-size:17.3px;letter-spacing:-.2px;line-height:38.6px;color:#333;padding-top:1px">$467.1K</div>
<div class="abs dotl" style="left:562px;top:535.0px;width:226px"></div>
<div class="t" style="left:571.5px;top:548.9px;font-size:16.4px;color:#585858">2</div>
<div class="t" style="left:613.2px;top:548.9px;font-size:16.4px;color:#585858">Netherlands</div>
<div class="abs" style="left:792px;top:536.6px;width:122.6px;height:38.6px;background:#f8f9fb;text-align:center;font-size:17.3px;letter-spacing:-.2px;line-height:38.6px;color:#333;padding-top:1px">$22.4K</div>
<div class="abs dotl" style="left:562px;top:575.6px;width:226px"></div>
<div class="t" style="left:571.5px;top:589.4px;font-size:16.4px;color:#585858">3</div>
<div class="t" style="left:613.2px;top:589.4px;font-size:16.4px;color:#585858">EIRE</div>
<div class="abs" style="left:792px;top:577.2px;width:122.6px;height:38.6px;background:#f8f9fb;text-align:center;font-size:17.3px;letter-spacing:-.2px;line-height:38.6px;color:#333;padding-top:1px">$18.3K</div>
<div class="abs dotl" style="left:562px;top:616.1px;width:226px"></div>
<div class="t" style="left:571.5px;top:630.0px;font-size:16.4px;color:#585858">4</div>
<div class="t" style="left:613.2px;top:630.0px;font-size:16.4px;color:#585858">France</div>
<div class="abs" style="left:792px;top:617.8px;width:122.6px;height:38.6px;background:#f8f9fb;text-align:center;font-size:17.3px;letter-spacing:-.2px;line-height:38.6px;color:#333;padding-top:1px">$14.6K</div>
<div class="abs dotl" style="left:562px;top:656.7px;width:226px"></div>
<div class="t" style="left:571.5px;top:670.5px;font-size:16.4px;color:#585858">5</div>
<div class="t" style="left:613.2px;top:670.5px;font-size:16.4px;color:#585858">Germany</div>
<div class="abs" style="left:792px;top:658.3px;width:122.6px;height:38.6px;background:#f8f9fb;text-align:center;font-size:17.3px;letter-spacing:-.2px;line-height:38.6px;color:#333;padding-top:1px">$14.4K</div>
<div class="abs dotl" style="left:562px;top:697.2px;width:226px"></div>
<div class="t" style="left:571.5px;top:711.1px;font-size:16.4px;color:#585858">6</div>
<div class="t" style="left:613.2px;top:711.1px;font-size:16.4px;color:#585858">Finland</div>
<div class="abs" style="left:792px;top:698.9px;width:122.6px;height:38.6px;background:#f8f9fb;text-align:center;font-size:17.3px;letter-spacing:-.2px;line-height:38.6px;color:#333;padding-top:1px">$5.4K</div>
<div class="abs dotl" style="left:562px;top:737.8px;width:226px"></div>
<div class="t" style="left:571.5px;top:751.6px;font-size:16.4px;color:#585858">7</div>
<div class="t" style="left:613.2px;top:751.6px;font-size:16.4px;color:#585858">Spain</div>
<div class="abs" style="left:792px;top:739.4px;width:122.6px;height:38.6px;background:#f8f9fb;text-align:center;font-size:17.3px;letter-spacing:-.2px;line-height:38.6px;color:#333;padding-top:1px">$5.4K</div>
<div class="abs dotl" style="left:562px;top:778.3px;width:226px"></div>
<div class="t" style="left:571.5px;top:792.2px;font-size:16.4px;color:#585858">8</div>
<div class="t" style="left:613.2px;top:792.2px;font-size:16.4px;color:#585858">Sweden</div>
<div class="abs" style="left:792px;top:779.9px;width:122.6px;height:38.6px;background:#f8f9fb;text-align:center;font-size:17.3px;letter-spacing:-.2px;line-height:38.6px;color:#333;padding-top:1px">$4.7K</div>
<div class="abs dotl" style="left:562px;top:818.9px;width:226px"></div>
<div class="t" style="left:571.5px;top:832.7px;font-size:16.4px;color:#585858">9</div>
<div class="t" style="left:613.2px;top:832.7px;font-size:16.4px;color:#585858">Denmark</div>
<div class="abs" style="left:792px;top:820.5px;width:122.6px;height:38.6px;background:#f8f9fb;text-align:center;font-size:17.3px;letter-spacing:-.2px;line-height:38.6px;color:#333;padding-top:1px">$4.0K</div>
<div class="abs dotl" style="left:562px;top:859.5px;width:226px"></div>
<div class="t" style="left:571.5px;top:873.3px;font-size:16.4px;color:#585858">10</div>
<div class="t" style="left:613.2px;top:873.3px;font-size:16.4px;color:#585858">Channel Islands</div>
<div class="abs" style="left:792px;top:861.1px;width:122.6px;height:38.6px;background:#f8f9fb;text-align:center;font-size:17.3px;letter-spacing:-.2px;line-height:38.6px;color:#333;padding-top:1px">$3.5K</div>
<div class="abs dotl" style="left:562px;top:900.0px;width:226px"></div>
<!-- Top Sold Products -->
<div class="panel" style="left:995px;top:360px;width:886px;height:591px"></div>
<div class="t b" style="left:1045px;top:413.5px;font-size:28px;color:#1c1c1e;letter-spacing:-.5px">Top Sold Products</div>
<div class="abs dot" style="left:1040px;top:458.7px;width:766px"></div>
<div class="t" style="left:1048.5px;top:480.2px;font-size:17px;color:#5a5a5a;letter-spacing:0.42px">Regency cakestand 3 tier</div>
<div class="t" style="left:1355.6px;top:480.2px;font-size:16.3px;color:#3c3c3c;letter-spacing:-1.1px">2.5%</div>
<div class="abs" style="left:1418px;top:479.6px;width:291.4px;height:17px;background:#1e8bfd;border-radius:0 8.5px 8.5px 0"></div>
<div class="t" style="left:1719.6px;top:480.0px;font-size:17.3px;color:#333;letter-spacing:-.25px">$14.4K</div>
<div class="abs dot" style="left:1040px;top:515.7px;width:766px"></div>
<div class="t" style="left:1048.5px;top:537.2px;font-size:17px;color:#5a5a5a;letter-spacing:0.58px">Jumbo bag red retrospot</div>
<div class="t" style="left:1355.6px;top:537.2px;font-size:16.3px;color:#3c3c3c;letter-spacing:-1.1px">1.5%</div>
<div class="abs" style="left:1418px;top:536.6px;width:175.0px;height:17px;background:#1e8bfd;border-radius:0 8.5px 8.5px 0"></div>
<div class="t" style="left:1603.2px;top:537.0px;font-size:17.3px;color:#333;letter-spacing:-.25px">$8.5K</div>
<div class="abs dot" style="left:1040px;top:572.7px;width:766px"></div>
<div class="t" style="left:1048.5px;top:594.2px;font-size:17px;color:#5a5a5a;letter-spacing:0.67px">Party bunting</div>
<div class="t" style="left:1355.6px;top:594.2px;font-size:16.3px;color:#3c3c3c;letter-spacing:-1.1px">1.1%</div>
<div class="abs" style="left:1418px;top:593.6px;width:127.5px;height:17px;background:#1e8bfd;border-radius:0 8.5px 8.5px 0"></div>
<div class="t" style="left:1555.7px;top:594.0px;font-size:17.3px;color:#333;letter-spacing:-.25px">$6.1K</div>
<div class="abs dot" style="left:1040px;top:629.7px;width:766px"></div>
<div class="t" style="left:1048.5px;top:651.2px;font-size:17px;color:#5a5a5a;letter-spacing:0.02px">Postage</div>
<div class="t" style="left:1355.6px;top:651.2px;font-size:16.3px;color:#3c3c3c;letter-spacing:-1.1px">0.9%</div>
<div class="abs" style="left:1418px;top:650.6px;width:112.7px;height:17px;background:#1e8bfd;border-radius:0 8.5px 8.5px 0"></div>
<div class="t" style="left:1540.9px;top:651.0px;font-size:17.3px;color:#333;letter-spacing:-.25px">$5.3K</div>
<div class="abs dot" style="left:1040px;top:686.7px;width:766px"></div>
<div class="t" style="left:1048.5px;top:708.2px;font-size:17px;color:#5a5a5a;letter-spacing:0.75px">White hanging heart t-light holder</div>
<div class="t" style="left:1355.6px;top:708.2px;font-size:16.3px;color:#3c3c3c;letter-spacing:-1.1px">0.9%</div>
<div class="abs" style="left:1418px;top:707.6px;width:111.3px;height:17px;background:#1e8bfd;border-radius:0 8.5px 8.5px 0"></div>
<div class="t" style="left:1539.5px;top:708.0px;font-size:17.3px;color:#333;letter-spacing:-.25px">$5.3K</div>
<div class="abs dot" style="left:1040px;top:743.7px;width:766px"></div>
<div class="t" style="left:1048.5px;top:765.2px;font-size:17px;color:#5a5a5a;letter-spacing:0.56px">Jumbo bag strawberry</div>
<div class="t" style="left:1355.6px;top:765.2px;font-size:16.3px;color:#3c3c3c;letter-spacing:-1.1px">0.9%</div>
<div class="abs" style="left:1418px;top:764.6px;width:104.9px;height:17px;background:#1e8bfd;border-radius:0 8.5px 8.5px 0"></div>
<div class="t" style="left:1533.1px;top:765.0px;font-size:17.3px;color:#333;letter-spacing:-.25px">$4.9K</div>
<div class="abs dot" style="left:1040px;top:800.7px;width:766px"></div>
<div class="t" style="left:1048.5px;top:822.2px;font-size:17px;color:#5a5a5a;letter-spacing:0.56px">Jumbo bag pink polkadot</div>
<div class="t" style="left:1355.6px;top:822.2px;font-size:16.3px;color:#3c3c3c;letter-spacing:-1.1px">0.8%</div>
<div class="abs" style="left:1418px;top:821.6px;width:100.7px;height:17px;background:#1e8bfd;border-radius:0 8.5px 8.5px 0"></div>
<div class="t" style="left:1528.9px;top:822.0px;font-size:17.3px;color:#333;letter-spacing:-.25px">$4.7K</div>
<div class="abs dot" style="left:1040px;top:857.7px;width:766px"></div>
<div class="t" style="left:1048.5px;top:878.2px;font-size:17px;color:#5a5a5a;letter-spacing:0.58px">Assorted colour bird ornament</div>
<div class="t" style="left:1355.6px;top:878.2px;font-size:16.3px;color:#3c3c3c;letter-spacing:-1.1px">0.7%</div>
<div class="abs" style="left:1418px;top:877.6px;width:86.9px;height:17px;background:#1e8bfd;border-radius:0 8.5px 8.5px 0"></div>
<div class="t" style="left:1515.1px;top:878.0px;font-size:17.3px;color:#333;letter-spacing:-.25px">$4.0K</div>
<div class="abs dot" style="left:1040px;top:902.2px;width:766px"></div>
<div class="abs vdash" style="left:1417.7px;top:459px;height:444px"></div>
<div class="abs sbar" style="left:1805px;top:458px;width:26px;height:446px"></div>
<!-- Customer Details -->
<div class="panel" style="left:68px;top:1010px;width:886px;height:591px"></div>
<div class="t b" style="left:113.5px;top:1058px;font-size:28px;color:#1c1c1e;letter-spacing:-.4px">Customer Details</div>
<div class="t" style="left:125.6px;top:1141.6px;font-size:16.9px;color:#5f5f5f;letter-spacing:0.3px;">Customer ID</div>
<div class="t" style="left:257.4px;top:1141.6px;font-size:16.9px;color:#5f5f5f;letter-spacing:0.55px;">Country</div>
<div class="t" style="left:413.5px;top:1119.6px;font-size:16.9px;color:#5f5f5f;letter-spacing:0.45px;">Day of Latest</div>
<div class="t" style="left:413.5px;top:1141.6px;font-size:16.9px;color:#5f5f5f;letter-spacing:0.45px;">purchase</div>
<div class="t" style="left:540px;top:1119.6px;font-size:16.9px;color:#5f5f5f;letter-spacing:0.45px;">No of</div>
<div class="t" style="left:540px;top:1141.6px;font-size:16.9px;color:#5f5f5f;letter-spacing:0px;">Purchases</div>
<div class="abs dot" style="left:117px;top:1159.6px;width:755px"></div>
<div class="t" style="left:126px;top:1186.7px;font-size:16.9px;color:#5a5a5a;letter-spacing:-0.1px;">14646</div>
<div class="t" style="left:257.4px;top:1186.7px;font-size:16.9px;color:#5a5a5a;letter-spacing:0.6px;">Netherlands</div>
<div class="t" style="left:413.6px;top:1186.7px;font-size:16.9px;color:#5a5a5a;letter-spacing:0.2px;">08 Dec 2022</div>
<div class="t" style="left:555.3px;width:40px;text-align:center;top:1186.7px;font-size:16.9px;color:#5a5a5a">4</div>
<div class="abs" style="left:621px;top:1182.7px;width:175.4px;height:20.7px;background:#1e8bfd"></div>
<div class="t" style="left:803.0px;top:1185.2px;font-size:17.3px;color:#333;letter-spacing:-0.25px;">$21.5K</div>
<div class="abs dot" style="left:117px;top:1225.5px;width:755px"></div>
<div class="t" style="left:126px;top:1252.7px;font-size:16.9px;color:#5a5a5a;letter-spacing:-0.1px;">17450</div>
<div class="t" style="left:257.4px;top:1252.7px;font-size:16.9px;color:#5a5a5a;letter-spacing:0.6px;">United Kingdom</div>
<div class="t" style="left:413.6px;top:1252.7px;font-size:16.9px;color:#5a5a5a;letter-spacing:0.2px;">01 Dec 2022</div>
<div class="t" style="left:555.3px;width:40px;text-align:center;top:1252.7px;font-size:16.9px;color:#5a5a5a">3</div>
<div class="abs" style="left:621px;top:1248.6px;width:110.9px;height:20.7px;background:#1e8bfd"></div>
<div class="t" style="left:738.5px;top:1251.1px;font-size:17.3px;color:#333;letter-spacing:-0.25px;">$13.5K</div>
<div class="abs dot" style="left:117px;top:1291.3px;width:755px"></div>
<div class="t" style="left:126px;top:1318.7px;font-size:16.9px;color:#5a5a5a;letter-spacing:-0.1px;">15769</div>
<div class="t" style="left:257.4px;top:1318.7px;font-size:16.9px;color:#5a5a5a;letter-spacing:0.6px;">United Kingdom</div>
<div class="t" style="left:413.6px;top:1318.7px;font-size:16.9px;color:#5a5a5a;letter-spacing:0.2px;">02 Dec 2022</div>
<div class="t" style="left:555.3px;width:40px;text-align:center;top:1318.7px;font-size:16.9px;color:#5a5a5a">3</div>
<div class="abs" style="left:621px;top:1314.6px;width:106.3px;height:20.7px;background:#1e8bfd"></div>
<div class="t" style="left:733.9px;top:1317.1px;font-size:17.3px;color:#333;letter-spacing:-0.25px;">$13.0K</div>
<div class="abs dot" style="left:117px;top:1357.2px;width:755px"></div>
<div class="t" style="left:126px;top:1384.6px;font-size:16.9px;color:#5a5a5a;letter-spacing:-0.1px;">14156</div>
<div class="t" style="left:257.4px;top:1384.6px;font-size:16.9px;color:#5a5a5a;letter-spacing:-0.6px;">EIRE</div>
<div class="t" style="left:413.6px;top:1384.6px;font-size:16.9px;color:#5a5a5a;letter-spacing:0.2px;">30 Nov 2022</div>
<div class="t" style="left:555.3px;width:40px;text-align:center;top:1384.6px;font-size:16.9px;color:#5a5a5a">6</div>
<div class="abs" style="left:621px;top:1380.6px;width:79.3px;height:20.7px;background:#1e8bfd"></div>
<div class="t" style="left:706.9px;top:1383.1px;font-size:17.3px;color:#333;letter-spacing:-0.25px;">$9.7K</div>
<div class="abs dot" style="left:117px;top:1423.0px;width:755px"></div>
<div class="t" style="left:126px;top:1450.6px;font-size:16.9px;color:#5a5a5a;letter-spacing:-0.1px;">13694</div>
<div class="t" style="left:257.4px;top:1450.6px;font-size:16.9px;color:#5a5a5a;letter-spacing:0.6px;">United Kingdom</div>
<div class="t" style="left:413.6px;top:1450.6px;font-size:16.9px;color:#5a5a5a;letter-spacing:0.2px;">06 Dec 2022</div>
<div class="t" style="left:555.3px;width:40px;text-align:center;top:1450.6px;font-size:16.9px;color:#5a5a5a">3</div>
<div class="abs" style="left:621px;top:1446.6px;width:65.8px;height:20.7px;background:#1e8bfd"></div>
<div class="t" style="left:693.4px;top:1449.1px;font-size:17.3px;color:#333;letter-spacing:-0.25px;">$8.1K</div>
<div class="abs dot" style="left:117px;top:1488.9px;width:755px"></div>
<div class="t" style="left:126px;top:1516.6px;font-size:16.9px;color:#5a5a5a;letter-spacing:-0.1px;">17511</div>
<div class="t" style="left:257.4px;top:1516.6px;font-size:16.9px;color:#5a5a5a;letter-spacing:0.6px;">United Kingdom</div>
<div class="t" style="left:413.6px;top:1516.6px;font-size:16.9px;color:#5a5a5a;letter-spacing:0.2px;">07 Dec 2022</div>
<div class="t" style="left:555.3px;width:40px;text-align:center;top:1516.6px;font-size:16.9px;color:#5a5a5a">3</div>
<div class="abs" style="left:621px;top:1512.6px;width:59.7px;height:20.7px;background:#1e8bfd"></div>
<div class="t" style="left:687.3px;top:1515.1px;font-size:17.3px;color:#333;letter-spacing:-0.25px;">$7.2K</div>
<div class="abs dot" style="left:117px;top:1550.2px;width:755px"></div>
<div class="abs vdash" style="left:620.5px;top:1160px;height:391px"></div>
<div class="abs sbar" style="left:875px;top:1159px;width:26px;height:393px"></div>
<!-- Daily Sales Trend -->
<div class="panel" style="left:995px;top:1010px;width:886px;height:591px"></div>
<div class="t b" style="left:1041px;top:1058px;font-size:28px;color:#1c1c1e;letter-spacing:-.3px">Daily Sales Trend</div>
<div class="abs" style="left:1577px;top:1068px;width:8px;height:8px;border-radius:50%;background:#1e8bfd"></div>
<div class="t" style="left:1593.5px;top:1061.6px;font-size:18.2px;color:#5e5e5e;letter-spacing:-.3px">Sales</div>
<div class="abs" style="left:1657px;top:1068px;width:8px;height:8px;border-radius:50%;background:#c4e3fd"></div>
<div class="t" style="left:1672.5px;top:1061.6px;font-size:18.2px;color:#5e5e5e;letter-spacing:.53px">No of purchase</div>
<div class="abs" style="left:1041.5px;top:1144.5px;width:0;height:0;border-left:10px solid transparent;border-right:10px solid transparent;border-top:21px solid #fa4d59"></div>
<div class="t b" style="left:1065px;top:1139.7px;font-size:27.5px;color:#fa4d59;letter-spacing:.2px">13.2%</div>
<div class="t" style="left:1153px;top:1143.0px;font-size:23.6px;color:#fa4d59;letter-spacing:.18px">vs. previous day</div>
<svg class="abs" style="left:995px;top:1200px" width="886" height="360" viewBox="995 1200 886 360">
<line x1="1075" x2="1765" y1="1263.3" y2="1263.3" stroke="#eeeeee" stroke-width="1.4"/>
<line x1="1075" x2="1765" y1="1342.8" y2="1342.8" stroke="#eeeeee" stroke-width="1.4"/>
<line x1="1075" x2="1765" y1="1422.3" y2="1422.3" stroke="#eeeeee" stroke-width="1.4"/>
<line x1="1083" x2="1765" y1="1501.3" y2="1501.3" stroke="#d0d0d0" stroke-width="1.1" stroke-dasharray="5 3"/>
<g fill="#d0e9fe">
<rect x="1112.7" y="1288.1" width="19.2" height="212.9"/>
<rect x="1132.8" y="1339.4" width="19.2" height="161.6"/>
<rect x="1152.9" y="1319.5" width="19.2" height="181.5"/>
<rect x="1172.9" y="1326.9" width="19.2" height="174.1"/>
<rect x="1213.1" y="1399.0" width="19.2" height="102.0"/>
<rect x="1233.2" y="1280.8" width="19.2" height="220.2"/>
<rect x="1253.3" y="1326.9" width="19.2" height="174.1"/>
<rect x="1273.3" y="1304.8" width="19.2" height="196.2"/>
<rect x="1293.4" y="1295.5" width="19.2" height="205.5"/>
<rect x="1313.5" y="1324.2" width="19.2" height="176.8"/>
<rect x="1353.7" y="1439.6" width="19.2" height="61.4"/>
<rect x="1373.7" y="1312.2" width="19.2" height="188.8"/>
<rect x="1393.8" y="1339.4" width="19.2" height="161.6"/>
<rect x="1413.9" y="1304.8" width="19.2" height="196.2"/>
<rect x="1434.0" y="1280.8" width="19.2" height="220.2"/>
<rect x="1454.1" y="1295.5" width="19.2" height="205.5"/>
<rect x="1494.2" y="1276.1" width="19.2" height="224.9"/>
<rect x="1514.3" y="1312.2" width="19.2" height="188.8"/>
<rect x="1534.4" y="1339.4" width="19.2" height="161.6"/>
<rect x="1554.5" y="1268.7" width="19.2" height="232.3"/>
<rect x="1574.5" y="1237.3" width="19.2" height="263.7"/>
<rect x="1594.6" y="1295.5" width="19.2" height="205.5"/>
<rect x="1634.8" y="1379.6" width="19.2" height="121.4"/>
<rect x="1654.9" y="1271.5" width="19.2" height="229.5"/>
<rect x="1674.9" y="1304.8" width="19.2" height="196.2"/>
<rect x="1695.0" y="1240.1" width="19.2" height="260.9"/>
<rect x="1715.1" y="1268.7" width="19.2" height="232.3"/>
</g>
<line x1="1160.9" x2="1160.9" y1="1501" y2="1507" stroke="#d8d8d8" stroke-width="1"/>
<line x1="1261.3" x2="1261.3" y1="1501" y2="1507" stroke="#d8d8d8" stroke-width="1"/>
<line x1="1361.7" x2="1361.7" y1="1501" y2="1507" stroke="#d8d8d8" stroke-width="1"/>
<line x1="1462.1" x2="1462.1" y1="1501" y2="1507" stroke="#d8d8d8" stroke-width="1"/>
<line x1="1562.5" x2="1562.5" y1="1501" y2="1507" stroke="#d8d8d8" stroke-width="1"/>
<line x1="1662.9" x2="1662.9" y1="1501" y2="1507" stroke="#d8d8d8" stroke-width="1"/>
<line x1="1763.3" x2="1763.3" y1="1501" y2="1507" stroke="#d8d8d8" stroke-width="1"/>
<polyline points="1123.0,1342.6 1143.3,1368.0 1163.2,1386.5 1183.5,1378.2 1223.7,1430.4 1243.5,1356.5 1263.4,1342.6 1283.7,1357.9 1304.0,1326.9 1363.6,1472.4 1383.4,1315.8 1403.7,1394.8 1423.6,1346.3 1443.9,1272.4 1464.2,1333.4 1503.9,1357.4 1524.3,1387.0 1544.1,1365.7 1564.0,1347.2 1584.3,1240.6 1644.3,1435.9 1664.6,1359.3 1684.5,1235.5 1704.8,1290.0 1724.7,1317.7" fill="none" stroke="#1e8bfd" stroke-width="3.4" stroke-linejoin="round" stroke-linecap="round"/>
</svg>
<div class="t" style="left:1031px;width:40px;text-align:right;top:1256.6px;font-size:17.6px;color:#626262">60</div>
<div class="t" style="left:1031px;width:40px;text-align:right;top:1335.8px;font-size:17.6px;color:#626262">40</div>
<div class="t" style="left:1031px;width:40px;text-align:right;top:1414.8px;font-size:17.6px;color:#626262">20</div>
<div class="t" style="left:1031px;width:40px;text-align:right;top:1482.6px;font-size:17.6px;color:#626262">0</div>
<div class="t" style="left:1776px;top:1279.0px;font-size:17.6px;color:#626262;letter-spacing:-.35px">$30.0K</div>
<div class="t" style="left:1776px;top:1350.5px;font-size:17.6px;color:#626262;letter-spacing:-.35px">$20.0K</div>
<div class="t" style="left:1776px;top:1422.6px;font-size:17.6px;color:#626262;letter-spacing:-.35px">$10.0K</div>
<div class="t" style="left:1776px;top:1482.6px;font-size:17.6px;color:#626262;letter-spacing:-.35px">$0.0K</div>
<div class="t" style="left:1120.9px;width:80px;text-align:center;top:1515.5px;font-size:17.6px;color:#626262">Mar 3</div>
<div class="t" style="left:1221.5px;width:80px;text-align:center;top:1515.5px;font-size:17.6px;color:#626262">Mar 8</div>
<div class="t" style="left:1322.2px;width:80px;text-align:center;top:1515.5px;font-size:17.6px;color:#626262">Mar 13</div>
<div class="t" style="left:1422.4px;width:80px;text-align:center;top:1515.5px;font-size:17.6px;color:#626262">Mar 18</div>
<div class="t" style="left:1522.6px;width:80px;text-align:center;top:1515.5px;font-size:17.6px;color:#626262">Mar 23</div>
<div class="t" style="left:1622.3px;width:80px;text-align:center;top:1515.5px;font-size:17.6px;color:#626262">Mar 28</div>
<div class="t" style="left:1699.4px;width:80px;text-align:center;top:1515.5px;font-size:17.6px;color:#626262">Apr 2</div>
<div class="t" style="left:794.3px;top:1617.9px;font-size:18.7px;color:#6a6a6a;letter-spacing:.37px">Design: Kavin Kumar G || Source : Kaggle</div>
</body>
</html>
